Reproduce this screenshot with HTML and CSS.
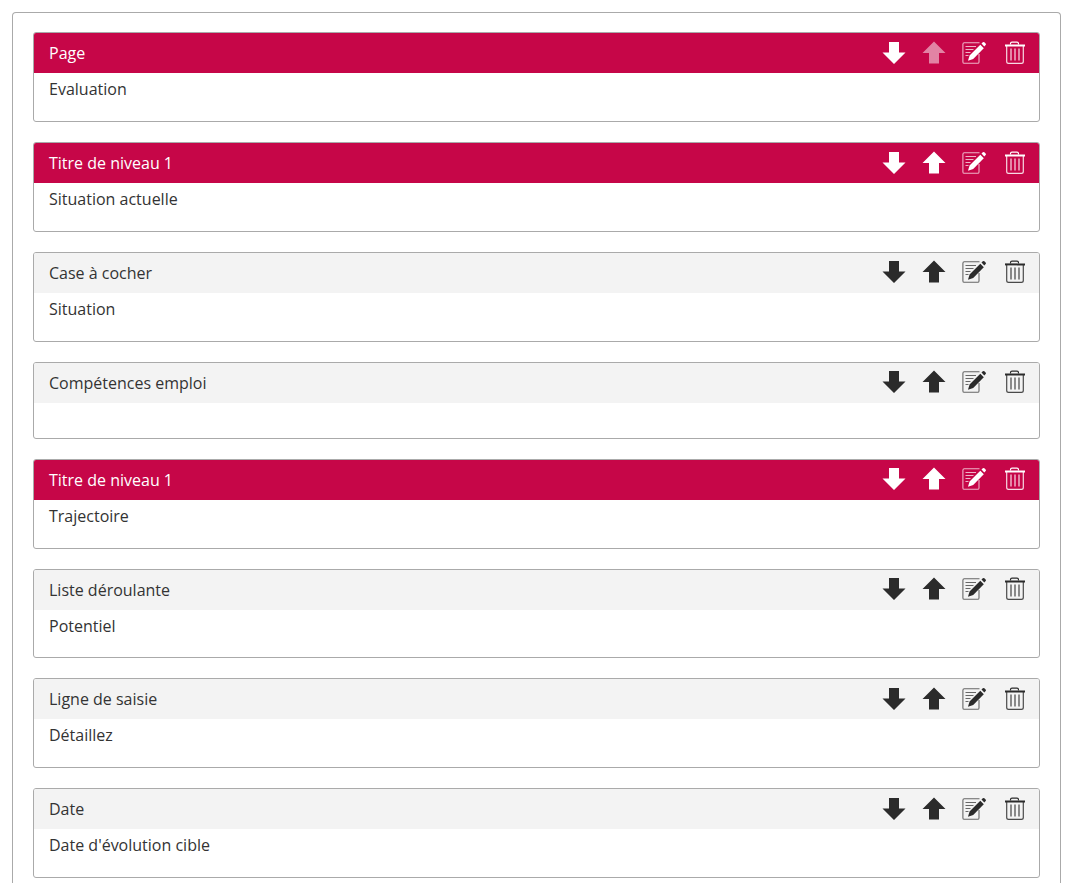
FILE: index.html
```html
<!DOCTYPE html>
<html lang="fr">
<head>
    <meta charset="UTF-8">
    <meta name="viewport" content="width=device-width, initial-scale=1.0">
    <title>Formulaire</title>
    <link rel="stylesheet" href="styles.css">
</head>
<body>
    <svg class="icon-defs" xmlns="http://www.w3.org/2000/svg" aria-hidden="true">
        <symbol id="icon-down" viewBox="0 0 24 24">
            <path fill="currentColor" d="M7 1h10v10.500h6.500L12 23 0.500 11.500H7z"/>
        </symbol>
        <symbol id="icon-up" viewBox="0 0 24 24">
            <path fill="currentColor" d="M12 0.500L23.500 12H17v10.500H7V12H0.500z"/>
        </symbol>
        <symbol id="icon-edit" viewBox="0 0 24 24">
            <path fill="none" stroke="currentColor" stroke-width="1.100" opacity="0.7" d="M17.500 1.800H2.300Q0.900 1.800 0.900 3.200V20.900Q0.900 22.300 2.300 22.300H15.600Q17 22.300 17 20.900V13"/>
            <path fill="none" stroke="currentColor" stroke-width="1.200" opacity="0.7" d="M3.500 5.500h10.500M3.500 8.500h8M3.500 11.500h5M3.500 14.500h3"/>
            <path fill="currentColor" d="M18.300 3.800l3.500 3.500L11.200 18l-5.200 1.700 1.600-5.200z"/>
            <path fill="currentColor" d="M19.500 2.600l1.300-1.300q0.800-0.700 1.600 0l1.200 1.200q0.700 0.800 0 1.600L22.300 5.400z"/>
        </symbol>
        <symbol id="icon-trash" viewBox="1 0 24 24">
            <path fill="none" stroke="currentColor" stroke-width="1.200" d="M9.500 3.500V2.700Q9.500 1.200 11 1.200h5Q17.500 1.200 17.500 2.700V3.500"/>
            <path fill="none" stroke="currentColor" stroke-width="2" d="M4 4.400h20"/>
            <path fill="none" stroke="currentColor" stroke-width="1.200" opacity="0.85" d="M5.700 5V20.500Q5.700 22.400 7.600 22.400H20.400Q22.300 22.400 22.300 20.500V5"/>
            <path fill="none" stroke="currentColor" stroke-width="1.400" opacity="0.75" d="M10 7.500V19.500M14 7.500V19.500M18 7.500V19.500"/>
        </symbol>
    </svg>

    <div class="container">
        <div class="field-box field-box-title">
            <div class="field-head">
                <span class="field-name">Page</span>
                <div class="field-actions">
                    <svg class="icon"><use href="#icon-down"/></svg>
                    <svg class="icon icon-disabled"><use href="#icon-up"/></svg>
                    <svg class="icon"><use href="#icon-edit"/></svg>
                    <svg class="icon"><use href="#icon-trash"/></svg>
                </div>
            </div>
            <div class="field-body">Evaluation</div>
        </div>

        <div class="field-box field-box-title">
            <div class="field-head">
                <span class="field-name">Titre de niveau 1</span>
                <div class="field-actions">
                    <svg class="icon"><use href="#icon-down"/></svg>
                    <svg class="icon"><use href="#icon-up"/></svg>
                    <svg class="icon"><use href="#icon-edit"/></svg>
                    <svg class="icon"><use href="#icon-trash"/></svg>
                </div>
            </div>
            <div class="field-body">Situation actuelle</div>
        </div>

        <div class="field-box">
            <div class="field-head">
                <span class="field-name">Case à cocher</span>
                <div class="field-actions">
                    <svg class="icon"><use href="#icon-down"/></svg>
                    <svg class="icon"><use href="#icon-up"/></svg>
                    <svg class="icon"><use href="#icon-edit"/></svg>
                    <svg class="icon"><use href="#icon-trash"/></svg>
                </div>
            </div>
            <div class="field-body">Situation</div>
        </div>

        <div class="field-box">
            <div class="field-head">
                <span class="field-name">Compétences emploi</span>
                <div class="field-actions">
                    <svg class="icon"><use href="#icon-down"/></svg>
                    <svg class="icon"><use href="#icon-up"/></svg>
                    <svg class="icon"><use href="#icon-edit"/></svg>
                    <svg class="icon"><use href="#icon-trash"/></svg>
                </div>
            </div>
            <div class="field-body field-body-empty"></div>
        </div>

        <div class="field-box field-box-title">
            <div class="field-head">
                <span class="field-name">Titre de niveau 1</span>
                <div class="field-actions">
                    <svg class="icon"><use href="#icon-down"/></svg>
                    <svg class="icon"><use href="#icon-up"/></svg>
                    <svg class="icon"><use href="#icon-edit"/></svg>
                    <svg class="icon"><use href="#icon-trash"/></svg>
                </div>
            </div>
            <div class="field-body">Trajectoire</div>
        </div>

        <div class="field-box">
            <div class="field-head">
                <span class="field-name">Liste déroulante</span>
                <div class="field-actions">
                    <svg class="icon"><use href="#icon-down"/></svg>
                    <svg class="icon"><use href="#icon-up"/></svg>
                    <svg class="icon"><use href="#icon-edit"/></svg>
                    <svg class="icon"><use href="#icon-trash"/></svg>
                </div>
            </div>
            <div class="field-body">Potentiel</div>
        </div>

        <div class="field-box">
            <div class="field-head">
                <span class="field-name">Ligne de saisie</span>
                <div class="field-actions">
                    <svg class="icon"><use href="#icon-down"/></svg>
                    <svg class="icon"><use href="#icon-up"/></svg>
                    <svg class="icon"><use href="#icon-edit"/></svg>
                    <svg class="icon"><use href="#icon-trash"/></svg>
                </div>
            </div>
            <div class="field-body">Détaillez</div>
        </div>

        <div class="field-box">
            <div class="field-head">
                <span class="field-name">Date</span>
                <div class="field-actions">
                    <svg class="icon"><use href="#icon-down"/></svg>
                    <svg class="icon"><use href="#icon-up"/></svg>
                    <svg class="icon"><use href="#icon-edit"/></svg>
                    <svg class="icon"><use href="#icon-trash"/></svg>
                </div>
            </div>
            <div class="field-body">Date d'évolution cible</div>
        </div>
    </div>
</body>
</html>
```

FILE: styles.css
```css
html, body {
    height: 100%;
    overflow: hidden;
}

body {
    font-family: 'Open Sans', sans-serif;
    font-size: 16px;
    line-height: 24px;
    margin: 0;
    background-color: #ffffff;
    color: #333;
}

.icon-defs {
    display: none;
}

.container {
    box-sizing: border-box;
    width: 1049px;
    height: calc(100vh - 12px);
    margin: 12px 0 0 12px;
    padding: 19.25px 20px 0 20px;
    border: 1px solid #aaa;
    border-bottom: none;
    border-radius: 4px 4px 0 0;
    display: flex;
    flex-direction: column;
    gap: 20px;
}

.field-box {
    flex-shrink: 0;
    border: 1px solid #aaa;
    border-radius: 3px;
    overflow: hidden;
}

.field-head {
    height: 40px;
    padding: 0 13px 0 15px;
    display: flex;
    align-items: center;
    justify-content: space-between;
    background-color: #f3f3f3;
}

.field-actions {
    display: flex;
    gap: 16px;
    padding-bottom: 1px;
}

.icon {
    display: block;
    width: 24px;
    height: 24px;
    color: #2b2b2b;
}

.icon-disabled {
    opacity: 0.5;
}

/* Title rows have the red header */
.field-box-title .field-head {
    background-color: #c60648;
    color: #ffffff;
}

.field-box-title .icon {
    color: #ffffff;
}

.field-body {
    box-sizing: border-box;
    padding: 4px 15px 19.75px 15px;
}

.field-body-empty {
    height: 35.3px;
    padding: 0;
}
```
